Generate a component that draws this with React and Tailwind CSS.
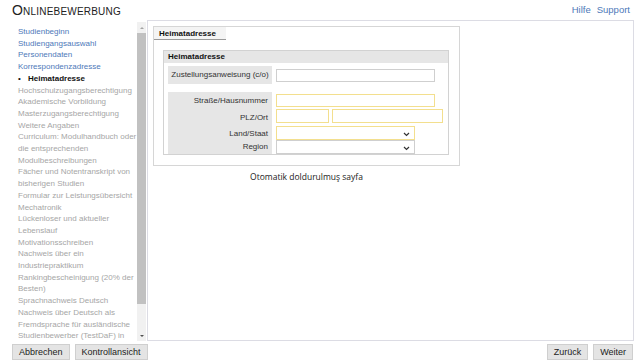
const navItems = [
  { label: 'Studienbeginn', state: 'link' },
  { label: 'Studiengangsauswahl', state: 'link' },
  { label: 'Personendaten', state: 'link' },
  { label: 'Korrespondenzadresse', state: 'link' },
  { label: 'Heimatadresse', state: 'active' },
  { label: 'Hochschulzugangsberechtigung' },
  { label: 'Akademische Vorbildung' },
  { label: 'Masterzugangsberechtigung' },
  { label: 'Weitere Angaben' },
  { label: 'Curriculum: Modulhandbuch oder die entsprechenden Modulbeschreibungen' },
  { label: 'Fächer und Notentranskript von bisherigen Studien' },
  { label: 'Formular zur Leistungsübersicht Mechatronik' },
  { label: 'Lückenloser und aktueller Lebenslauf' },
  { label: 'Motivationsschreiben' },
  { label: 'Nachweis über ein Industriepraktikum' },
  { label: 'Rankingbescheinigung (20% der Besten)' },
  { label: 'Sprachnachweis Deutsch' },
  { label: 'Nachweis über Deutsch als Fremdsprache für ausländische Studienbewerber (TestDaF) in' },
];

function Chevron() {
  return (
    <svg width="7" height="5" viewBox="0 0 7 5" className="absolute right-[4px] top-[5px]">
      <path d="M1 1 L3.5 3.5 L6 1" fill="none" stroke="#333" strokeWidth="1.2" />
    </svg>
  );
}

function Label({ children }) {
  return (
    <div className="w-[104px] bg-[#e6e6e6] text-right pr-[4px] text-[8px] text-[#333] leading-[13px]">
      {children}
    </div>
  );
}

export default function App() {
  return (
    <div className="w-[640px] h-[360px] bg-white overflow-hidden font-['Liberation_Sans',Arial,sans-serif] flex flex-col">
      {/* Header */}
      <div className="h-[21px] flex items-center justify-between pl-[12px] pr-[10px]">
        <div className="text-[14px] text-[#222] [font-variant:small-caps] tracking-[0.2px] leading-none">
          Onlinebewerbung
        </div>
        <div className="flex gap-[6px] text-[9.5px] text-[#4e79b9] mt-[1px]">
          <span>Hilfe</span>
          <span>Support</span>
        </div>
      </div>

      {/* Body */}
      <div className="flex h-[321px]">
        <div className="w-[137px] pl-[18px] pt-[6px] overflow-hidden text-[8px] leading-[11.7px]">
          {navItems.map((item) => (
            <div
              key={item.label}
              className={
                item.state === 'link'
                  ? 'text-[#4e79b9]'
                  : item.state === 'active'
                  ? 'text-[#111] font-bold'
                  : 'text-[#a6a6a6]'
              }
            >
              {item.state === 'active' ? (
                <span className="flex">
                  <span className="w-[10px] font-normal">•</span>
                  <span>{item.label}</span>
                </span>
              ) : (
                item.label
              )}
            </div>
          ))}
        </div>

        {/* Scrollbar */}
        <div className="w-[9px] bg-[#f1f1f1] flex flex-col mt-[2px]">
          <div className="h-[11px] flex items-center justify-center">
            <div className="w-0 h-0 border-l-[2px] border-r-[2px] border-b-[2px] border-l-transparent border-r-transparent border-b-[#a3a3a3]" />
          </div>
          <div className="h-[271px] bg-[#c1c1c1]" />
          <div className="flex-1 flex items-end justify-center pb-[4px]">
            <div className="w-0 h-0 border-l-[2px] border-r-[2px] border-t-[2px] border-l-transparent border-r-transparent border-t-[#505050]" />
          </div>
        </div>

        {/* Main panel */}
        <div className="flex-1 mr-[6px] ml-[1px] border border-[#dcdce4] p-[5px] flex flex-col items-start">
          <div className="w-[307px] h-[140px] border border-[#d6d6d6] flex flex-col">
            <div className="w-[72px] h-[13px] bg-[#f4f4f4] border-b border-[#9a9a9a] text-[8px] font-bold text-[#111] pl-[5px] leading-[13px]">
              Heimatadresse
            </div>
            <div className="ml-[9px] mt-[10px] w-[286px] h-[105px] border border-[#d2d2d2]">
              <div className="h-[12px] bg-[#e6e6e6] text-[8px] font-bold text-[#111] pl-[4px] leading-[12px]">
                Heimatadresse
              </div>
              <div className="px-[4px] pt-[3px]">
                <div className="flex items-stretch">
                  <div className="w-[104px] h-[18px] bg-[#e6e6e6] text-[8px] text-[#333] flex items-center justify-center">
                    Zustellungsanweisung (c/o)
                  </div>
                  <div className="ml-[4px] mt-[3px] w-[159px] h-[13px] border border-[#cfcfcf] bg-white" />
                </div>
                <div className="mt-[8px] flex flex-col">
                  <div className="flex">
                    <Label>
                      <div className="pt-[2px]">Straße/Hausnummer</div>
                    </Label>
                    <div className="ml-[4px] mt-[2px] w-[159px] h-[13px] border border-[#f3df8e] bg-white" />
                  </div>
                  <div className="flex">
                    <Label>
                      <div className="pt-[4px] pb-[2px]">PLZ/Ort</div>
                    </Label>
                    <div className="ml-[4px] mt-[2px] w-[53px] h-[14px] border border-[#f3df8e] bg-white" />
                    <div className="ml-[3px] mt-[2px] w-[111px] h-[14px] border border-[#f3df8e] bg-white" />
                  </div>
                  <div className="flex">
                    <Label>
                      <div className="pt-[1px]">Land/Staat</div>
                    </Label>
                    <div className="relative ml-[4px] w-[139px] h-[14px] border border-[#f3df8e] bg-white">
                      <Chevron />
                    </div>
                  </div>
                  <div className="flex">
                    <Label>
                      <div className="pb-[1px]">Region</div>
                    </Label>
                    <div className="relative ml-[4px] w-[139px] h-[14px] border border-[#cfcfcf] bg-white">
                      <Chevron />
                    </div>
                  </div>
                </div>
              </div>
            </div>
          </div>
          <div className="w-[307px] text-center mt-[5px] text-[8.5px] text-[#222] font-['Open_Sans',sans-serif]">
            Otomatik doldurulmuş sayfa
          </div>
        </div>
      </div>

      {/* Footer */}
      <div className="flex justify-between pl-[12px] pr-[7px] mt-[3px]">
        <div className="flex gap-[5px]">
          <button className="h-[16px] px-[6px] bg-[#e4e4e4] border border-[#cfcfcf] text-[9px] text-[#222] leading-none">
            Abbrechen
          </button>
          <button className="h-[16px] px-[6px] bg-[#e4e4e4] border border-[#cfcfcf] text-[9px] text-[#222] leading-none">
            Kontrollansicht
          </button>
        </div>
        <div className="flex gap-[5px]">
          <button className="h-[16px] px-[6px] bg-[#e4e4e4] border border-[#cfcfcf] text-[9px] text-[#222] leading-none">
            Zurück
          </button>
          <button className="h-[16px] px-[6px] bg-[#e4e4e4] border border-[#cfcfcf] text-[9px] text-[#222] leading-none">
            Weiter
          </button>
        </div>
      </div>
    </div>
  );
}
